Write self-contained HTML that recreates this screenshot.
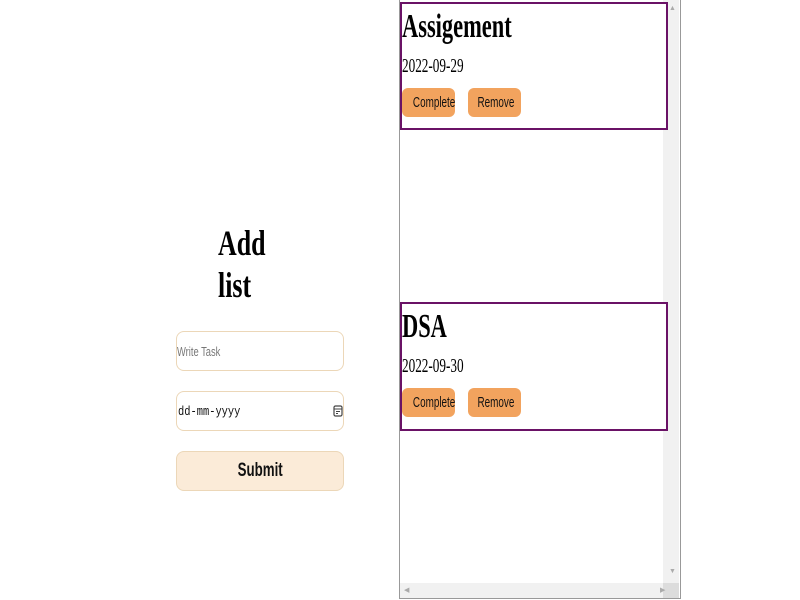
<!DOCTYPE html>
<html><head><style>
body{margin:0;width:800px;height:600px;background:#fff;position:relative;overflow:hidden;font-family:"Liberation Sans",sans-serif}
.a{position:absolute}
.s{display:inline-block;transform:scaleX(.72);transform-origin:left center;white-space:nowrap}
.c{display:inline-block;transform:scaleX(.66);transform-origin:center;white-space:nowrap}
h1{margin:0;font-family:"Liberation Serif",serif;font-weight:bold}
.inp{position:absolute;left:176px;width:166px;height:38px;border:1px solid #ecd7b8;border-radius:8px;box-sizing:content-box}
.card{position:absolute;left:400px;width:264px;border:2px solid #6a1266;background:#fff}
.btn{position:absolute;top:84px;height:29px;background:#f2a35e;border-radius:6px;font-size:15px;line-height:29px;text-align:center;color:#111}
.card .s{transform:scaleX(.66)}
</style></head><body>
<h1 class="a" style="left:218px;top:222px;font-size:36px;line-height:42px"><span class="s">Add</span><br><span class="s">list</span></h1>
<div class="inp" style="top:331px"><span class="a s" style="left:0;top:12px;font-size:13px;color:#777">Write Task</span></div>
<div class="inp" style="top:391px"><span class="a s" style="left:1px;top:12px;font-size:13px;font-family:'Liberation Mono',monospace;color:#111;transform:scaleX(.8)">dd-mm-yyyy</span>
<svg class="a" style="left:156px;top:13px" width="10" height="12" viewBox="0 0 10 12"><rect x="1" y="1" width="8" height="10" rx="1.5" fill="none" stroke="#444" stroke-width="1.2"/><line x1="1" y1="4" x2="9" y2="4" stroke="#444"/><rect x="3" y="6" width="4" height="1" fill="#444"/><rect x="3" y="8" width="2" height="1" fill="#444"/></svg></div>
<div class="inp" style="top:451px;background:#fbebd8;text-align:center;line-height:38px;font-size:19px;font-weight:bold;color:#111"><span class="c" style="transform:scaleX(.7)">Submit</span></div>

<div class="a" style="left:399px;top:0;width:280px;height:598px;border:1px solid #999;border-top:none;box-sizing:content-box"></div>
<div class="a" style="left:663px;top:0;width:16px;height:583px;background:#f1f1f1"></div>
<div class="a" style="left:400px;top:583px;width:263px;height:15px;background:#f1f1f1"></div>
<div class="a" style="left:663px;top:583px;width:16px;height:15px;background:#dcdcdc"></div>
<div class="a" style="left:669px;top:5px;font-size:7px;color:#aaa">▲</div>
<div class="a" style="left:669px;top:568px;font-size:7px;color:#aaa">▼</div>
<div class="a" style="left:404px;top:586px;font-size:7px;color:#aaa">◀</div>
<div class="a" style="left:660px;top:586px;font-size:7px;color:#aaa">▶</div>

<div class="card" style="top:2px;height:124px">
<h1 class="a" style="left:0;top:4px;font-size:34px"><span class="s">Assigement</span></h1>
<div class="a" style="left:0;top:51px;font-family:'Liberation Serif',serif;font-size:20px"><span class="s">2022-09-29</span></div>
<div class="btn" style="left:0;width:53px"><span class="c">Complete</span></div>
<div class="btn" style="left:66px;width:53px"><span class="c">Remove</span></div>
</div>
<div class="card" style="top:302px;height:125px">
<h1 class="a" style="left:0;top:4px;font-size:34px"><span class="s">DSA</span></h1>
<div class="a" style="left:0;top:51px;font-family:'Liberation Serif',serif;font-size:20px"><span class="s">2022-09-30</span></div>
<div class="btn" style="left:0;width:53px"><span class="c">Complete</span></div>
<div class="btn" style="left:66px;width:53px"><span class="c">Remove</span></div>
</div>
</body></html>
